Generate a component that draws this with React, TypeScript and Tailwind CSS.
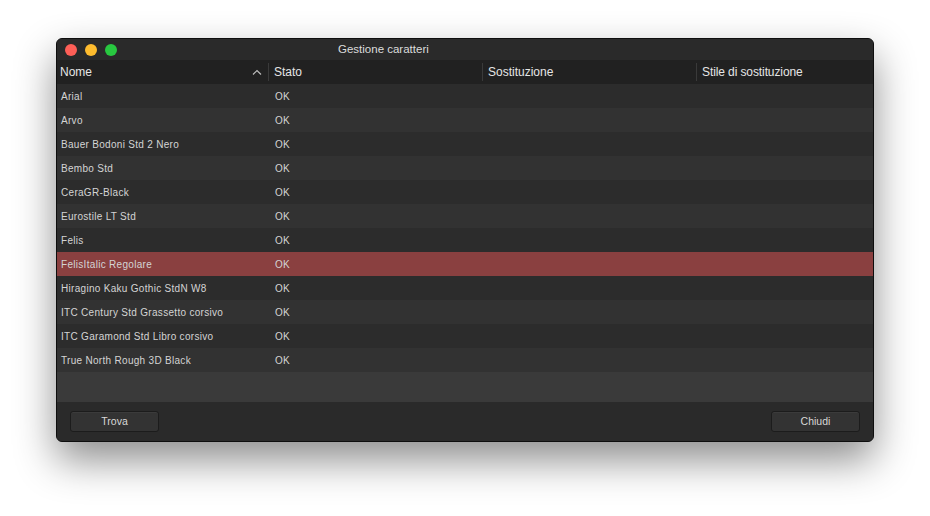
import React from 'react'

const FONTS = [
  'Arial',
  'Arvo',
  'Bauer Bodoni Std 2 Nero',
  'Bembo Std',
  'CeraGR-Black',
  'Eurostile LT Std',
  'Felis',
  'FelisItalic Regolare',
  'Hiragino Kaku Gothic StdN W8',
  'ITC Century Std Grassetto corsivo',
  'ITC Garamond Std Libro corsivo',
  'True North Rough 3D Black',
]

const SELECTED = 'FelisItalic Regolare'

export default function App() {
  return (
    <div
      className="w-[930px] h-[516px] bg-white pt-[38px] pl-[56px]"
      style={{ fontFamily: '"Liberation Sans", Arial, sans-serif' }}
    >
      <div className="w-[818px] h-[404px] flex flex-col rounded-[6px] overflow-hidden border border-[#0e0e0e] bg-[#2a2a2a] shadow-[0_18px_40px_rgba(0,0,0,0.45)]">
        {/* Title bar */}
        <div className="h-[21px] flex items-center relative bg-[#2a2a2a]">
          <div className="flex items-center gap-[8px] pl-[8px]">
            <span className="w-[12px] h-[12px] rounded-full bg-[#fe5f57]" />
            <span className="w-[12px] h-[12px] rounded-full bg-[#febc2e]" />
            <span className="w-[12px] h-[12px] rounded-full bg-[#28c840]" />
          </div>
          <div className="absolute left-[281px] top-0 h-full flex items-center text-[11.5px] text-[#dcdcdc] pointer-events-none">
            Gestione caratteri
          </div>
        </div>

        {/* Header */}
        <div className="h-[24px] flex items-center bg-[#212121] text-[12px] text-[#e6e6e6]">
          <div className="w-[211px] flex items-center justify-between pl-[3px] pr-[6px]">
            <span>Nome</span>
            <svg width="10" height="6" viewBox="0 0 10 6" fill="none">
              <path d="M1 5.5 L5 1.5 L9 5.5" stroke="#bdbdbd" strokeWidth="1.2" />
            </svg>
          </div>
          <div className="w-[214px] h-[18px] flex items-center border-l border-[#3a3a3a] pl-[5px]">Stato</div>
          <div className="w-[214px] h-[18px] flex items-center border-l border-[#3a3a3a] pl-[5px]">Sostituzione</div>
          <div className="flex-1 h-[18px] flex items-center border-l border-[#3a3a3a] pl-[5px] tracking-[-0.1px]">
            Stile di sostituzione
          </div>
        </div>

        {/* Rows */}
        <div className="flex flex-col">
          {FONTS.map((name, i) => {
            const bg =
              name === SELECTED ? 'bg-[#8a4040]' : i % 2 === 0 ? 'bg-[#2c2c2c]' : 'bg-[#323232]'
            return (
              <div
                key={name}
                className={`h-[24px] flex items-center text-[10px] tracking-[0.3px] text-[#d4d4d4] ${bg}`}
              >
                <div className="w-[211px] pl-[4px]">{name}</div>
                <div className="w-[214px] pl-[7px]">OK</div>
              </div>
            )
          })}
        </div>
        <div className="h-[30px] bg-[#3a3a3a]" />

        {/* Footer */}
        <div className="flex-1 flex items-center justify-between px-[13px] bg-[#2a2a2a]">
          <button className="w-[89px] h-[21px] rounded-[3px] border border-[#1c1c1c] bg-[#333333] text-[10.5px] text-[#d8d8d8] shadow-[inset_0_1px_0_rgba(255,255,255,0.04)]">
            Trova
          </button>
          <button className="w-[89px] h-[21px] rounded-[3px] border border-[#1c1c1c] bg-[#333333] text-[10.5px] text-[#d8d8d8] shadow-[inset_0_1px_0_rgba(255,255,255,0.04)]">
            Chiudi
          </button>
        </div>
      </div>
    </div>
  )
}
